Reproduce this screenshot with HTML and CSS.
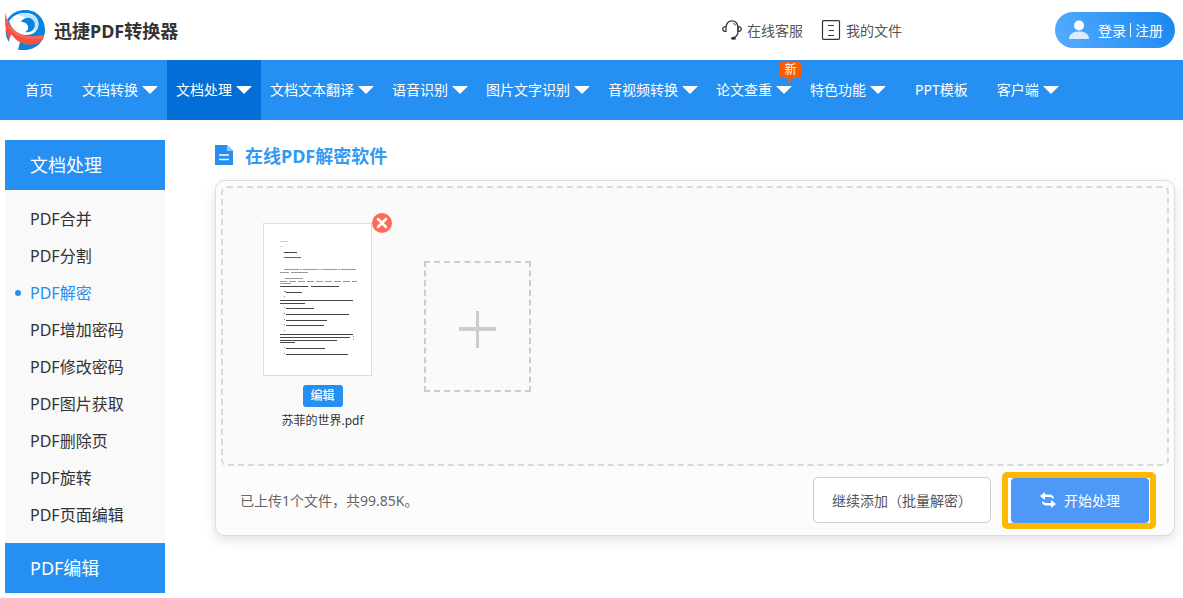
FILE: index.html
```html
<!DOCTYPE html>
<html lang="zh-CN">
<head>
<meta charset="utf-8">
<meta name="viewport" content="width=device-width, initial-scale=1">
<title>迅捷PDF转换器</title>
<link rel="stylesheet" href="styles.css">
</head>
<body>
<header class="top">
  <a class="brand" href="#">
    <svg class="brand-logo" viewBox="0 0 40 40" aria-hidden="true">
      <path fill="#0785dc" d="M2 10C7 2 14 0 21 0c11 0 19 9 19 20S31 40 20 40h-7l2-8L5 22z"/>
      <path fill="#fff" d="M4 11C8 5 15 2.500 22 3c8 .5 12 6 11.500 12-1 7-6 10-12.500 10C13 25 7 20 4 11z"/>
      <path fill="#bfe4fc" d="M12 5C18 1.500 27 3 31.500 8c3 5 2 11-2 14 1-6 0-10-4-13-4-2-9-3-13.500-4z"/>
      <path fill="#0785dc" d="M16 12c2-4 7-5 10-3.500 5 3 5 9 1.500 12-2 1.500-5 2-7.500 1.500 3-1.500 4-4 2.500-7-1.500-2.500-4-3.500-6.500-3z"/>
      <path fill="#0785dc" d="M1 18l4 6-1 8C1 27 0 23 1 18z"/>
      <path fill="#f9503f" d="M.5 3c1 7 5 16 13 20 7 4 17 4 25.500 2-1 5-4 8-8 9-8 2-18 0-24.500-9.500L4 29C0 21-.5 12 .5 3z"/>
      <path fill="#fd8070" d="M.5 3c1 7 5 16 13 20 7 4 17 4 25.500 2l-1 3C26 31 9 28 3 16 1.500 12 .5 8 .5 3z" opacity=".45"/>
    </svg>
    <span class="brand-name">迅捷PDF转换器</span>
  </a>
  <div class="tools">
    <a class="tool" href="#">
      <svg class="tool-icon" viewBox="0 0 20 20" fill="none" stroke="#333" aria-hidden="true">
        <path stroke-width="1.300" d="M4 7C4.500 3 7 .8 10 .8S15.500 3 16 7v4.500c0 3-1.500 5-4 6"/>
        <path stroke-width="1.200" d="M4 6.500C1.800 6.500.7 7.500.7 9s1.100 2.500 3.300 2.500zM16 6.500c2.200 0 3.300 1 3.300 2.500s-1.100 2.500-3.300 2.500z"/>
        <path stroke-width="1" d="M11.500 3l2 2.500"/>
        <ellipse cx="11.500" cy="18.200" rx="2.600" ry="1.500" fill="#333" stroke="none"/>
      </svg>在线客服</a>
    <a class="tool" href="#">
      <svg class="tool-icon" viewBox="0 0 20 20" fill="none" stroke="#333" aria-hidden="true">
        <rect x="1.500" y=".7" width="17" height="18.600" rx="1" stroke-width="1.200"/>
        <path d="M7 5.500h6M8 10.500h5M7 15.500h6" stroke-width="1.200"/>
      </svg>我的文件</a>
  </div>
  <button class="login" type="button">
    <svg class="login-icon" viewBox="0 0 20 20" aria-hidden="true">
      <circle cx="10" cy="5.500" r="5" fill="#fff"/>
      <path fill="#fff" opacity=".8" d="M0 19c0-5 4-7.500 10-7.500S20 14 20 19z"/>
    </svg>
    <span>登录</span><span class="login-rule"></span><span>注册</span>
  </button>
</header>

<nav class="nav">
  <a class="nav-item nav-plain" href="#">首页</a>
  <a class="nav-item nav-menu" href="#">文档转换</a>
  <a class="nav-item nav-menu nav-active" href="#">文档处理</a>
  <a class="nav-item nav-menu" href="#">文档文本翻译</a>
  <a class="nav-item nav-menu" href="#">语音识别</a>
  <a class="nav-item nav-menu" href="#">图片文字识别</a>
  <a class="nav-item nav-menu" href="#">音视频转换</a>
  <a class="nav-item nav-menu" href="#">论文查重<span class="badge">新</span></a>
  <a class="nav-item nav-menu" href="#">特色功能</a>
  <a class="nav-item nav-plain" href="#">PPT模板</a>
  <a class="nav-item nav-menu" href="#">客户端</a>
</nav>

<div class="page">
  <aside class="side">
    <h2 class="side-title">文档处理</h2>
    <ul class="side-list">
      <li><a class="side-link" href="#">PDF合并</a></li>
      <li><a class="side-link" href="#">PDF分割</a></li>
      <li><a class="side-link side-current" href="#">PDF解密</a></li>
      <li><a class="side-link" href="#">PDF增加密码</a></li>
      <li><a class="side-link" href="#">PDF修改密码</a></li>
      <li><a class="side-link" href="#">PDF图片获取</a></li>
      <li><a class="side-link" href="#">PDF删除页</a></li>
      <li><a class="side-link" href="#">PDF旋转</a></li>
      <li><a class="side-link" href="#">PDF页面编辑</a></li>
    </ul>
    <h2 class="side-title">PDF编辑</h2>
  </aside>

  <main class="main">
    <h1 class="title">
      <svg class="title-icon" viewBox="0 0 18 20" aria-hidden="true">
        <path fill="#268ff2" d="M0 0h12l6 6v14H0z"/>
        <path fill="#92c9fb" d="M12 0l6 6h-6z"/>
        <path stroke="#fff" stroke-width="1.500" d="M4 10h10M4 14.500h10"/>
      </svg>在线PDF解密软件</h1>
    <section class="panel">
      <div class="drop">
        <figure class="file">
          <div class="thumb">
            <svg class="thumb-page" viewBox="0 0 107 151" fill="none" stroke="#444" stroke-width="1" aria-hidden="true">
              <path stroke="#ccc" d="M16 17.500h8M16 22.500h2"/>
              <path d="M20 28.500h13"/>
              <path stroke="#666" d="M20 33.500h17"/>
              <path stroke="#999" stroke-dasharray="15 1 2 1" d="M20 45.500h73"/>
              <path stroke="#999" stroke-dasharray="9 2 17 2" d="M16 48.500h29"/>
              <path stroke="#999" d="M21 54.500h18"/>
              <path stroke="#999" stroke-dasharray="7 2" d="M16 57.500h77"/>
              <path stroke="#999" d="M16 59.500h11"/>
              <path stroke-dasharray="28 3" d="M16 62.500h60"/>
              <path stroke="#888" d="M20 67.500h2M20 72.500h1M20 83.500h1M20 89.500h1M20 95.500h1M20 100.500h1M20 106.500h1M20 123.500h1M20 129.500h1M89 112.500h1M89 115.500h1"/>
              <path d="M22 68.500h16M16 76.500h73M16 79.500h25M22 84.500h28M22 90.500h63M22 96.500h41M22 101.500h38M16 110.500h73M16 113.500h70M16 116.500h57M16 118.500h15M22 124.500h39M22 130.500h62"/>
            </svg>
            <button class="remove" type="button" aria-label="删除">
              <svg viewBox="0 0 20 20" stroke="#fff" stroke-width="2.500" stroke-linecap="round" aria-hidden="true"><path d="M6 6l8 8M14 6l-8 8"/></svg>
            </button>
          </div>
          <button class="edit" type="button">编辑</button>
          <figcaption class="file-name">苏菲的世界.pdf</figcaption>
        </figure>
        <button class="add" type="button" aria-label="添加文件"></button>
      </div>
      <div class="actions">
        <p class="status">已上传1个文件，共99.85K。</p>
        <button class="more" type="button">继续添加（批量解密）</button>
        <div class="highlight">
          <button class="start" type="button">
            <svg class="start-icon" viewBox="0 0 16 16" fill="#fff" aria-hidden="true">
              <path d="M5 0v2.500h4c3.500 0 5 1.500 5 4.500-1.500-1.200-3-2-5-2H5v3L0 4z"/>
              <path d="M11 16v-2.500H7c-3.500 0-5-1.500-5-4.500 1.500 1.200 3 2 5 2h4V8l5 4z"/>
            </svg>开始处理</button>
        </div>
      </div>
    </section>
  </main>
</div>
</body>
</html>
```
FILE: styles.css
```css
* { box-sizing: border-box; }
body {
  margin: 0;
  overflow-x: hidden;
  background: #fff;
  color: #333;
  font-family: "Noto Sans", "Noto Sans CJK SC", sans-serif;
  font-size: 14px;
}
a { color: inherit; text-decoration: none; }
button { padding: 0; border: 0; font: inherit; cursor: pointer; }
h1, h2, p, ul, figure { margin: 0; padding: 0; }
ul { list-style: none; }

.top { display: flex; align-items: center; height: 60px; padding: 0 8px 0 5px; }
.brand { display: flex; align-items: center; gap: 9px; }
.brand-logo { width: 40px; height: 40px; }
.brand-name { font-size: 18px; font-weight: 700; }
.tools { display: flex; gap: 18px; margin-left: auto; color: #555; }
.tool { display: flex; align-items: center; gap: 5px; }
.tool-icon { width: 20px; height: 20px; }
.login {
  display: flex; align-items: center; width: 120px; height: 36px;
  margin-left: 153px; padding-left: 14px; border-radius: 18px;
  background: linear-gradient(60deg, #57adff, #1886ee); color: #fff;
}
.login-icon { width: 20px; height: 20px; margin-right: 9px; }
.login-rule { width: 1px; height: 14px; margin: 0 4px; background: #fff; }

.nav { display: flex; height: 60px; padding-left: 5px; background: #268ff2; color: #fff; }
.nav-item { position: relative; display: flex; align-items: center; white-space: nowrap; }
.nav-plain { padding: 0 20px 2px; }
.nav-menu { padding: 0 9px 2px; }
.nav-menu::after {
  content: ""; margin: 2px 0 0 4px;
  border: 8px solid transparent; border-top-color: #fff; border-bottom: 0;
}
.nav-active { background: #036fd6; }
.badge {
  position: absolute; top: 2px; right: 0; width: 21px; height: 16px;
  border-radius: 2px; background: #ff5a00; font-size: 12px; line-height: 16px; text-align: center;
}
.badge::after {
  content: ""; position: absolute; top: 16px; left: 8px;
  border-top: 5px solid #ff5a00; border-right: 5px solid transparent;
}

.page { display: flex; gap: 50px; padding: 20px 8px 0 5px; }
.side { flex: none; width: 160px; background: #f9f9f9; }
.side-title {
  height: 50px; padding-left: 25px; background: #268ff2; color: #fff;
  font-size: 18px; font-weight: 400; line-height: 50px;
}
.side-list { padding: 11px 0 9px; }
.side-link {
  position: relative; display: block; height: 37px; padding-left: 25px;
  font-size: 16px; line-height: 37px;
}
.side-current { color: #268ff2; }
.side-current::before {
  content: ""; position: absolute; top: 15px; left: 10px;
  width: 6px; height: 6px; border-radius: 50%; background: #268ff2;
}

.main { flex: 1; min-width: 0; }
.title {
  display: flex; align-items: center; gap: 12px; height: 30px; margin-bottom: 10px;
  color: #329af3; font-size: 18px; font-weight: 700;
}
.title-icon { width: 18px; height: 20px; }
.panel {
  padding: 5px; border: 1px solid #dcdcdc; border-radius: 10px;
  background: #fcfcfc; box-shadow: 0 4px 12px rgba(0, 0, 0, .12);
}
.drop {
  display: flex; align-items: flex-start; gap: 42px; padding: 35px 40px 33px;
  border: 2px dashed #d9d9d9; border-radius: 6px; background: #fafafa;
}
.file { display: flex; flex-direction: column; align-items: center; width: 119px; }
.thumb {
  position: relative; align-self: flex-start; width: 109px; height: 153px;
  border: 1px solid #ddd; background: #fff;
}
.thumb-page { display: block; width: 100%; height: 100%; }
.remove {
  position: absolute; top: -11px; right: -21px; width: 20px; height: 20px;
  border-radius: 50%; background: #fe6b53;
}
.remove svg { display: block; width: 20px; height: 20px; }
.edit {
  width: 40px; height: 22px; margin-top: 9px; border-radius: 3px;
  background: #268ff2; color: #fff; font-size: 12px; font-weight: 500; line-height: 22px;
}
.file-name { margin-top: 4px; font-size: 12px; line-height: 20px; white-space: nowrap; }
.add {
  width: 107px; height: 131px; margin-top: 38px; border: 2px dashed #ccc;
  background:
    linear-gradient(#ccc, #ccc) center 64px / 37px 4px no-repeat,
    linear-gradient(#ccc, #ccc) center 48px / 3px 37px no-repeat;
}
.actions { display: flex; align-items: center; height: 64px; padding: 4px 13px 0 19px; }
.status { flex: 1; color: #666; }
.more {
  width: 178px; height: 46px; margin-right: 11px; border: 1px solid #ccc;
  border-radius: 5px; background: #fff; color: #555;
}
.highlight {
  padding: 6px 7px 6px 9px; border-radius: 5px;
  background: #fff; box-shadow: inset 0 0 0 6px #ffb900;
}
.start {
  display: flex; align-items: center; justify-content: center; gap: 8px;
  width: 138px; height: 45px; border-radius: 4px; background: #4e98f7; color: #fff;
}
.start-icon { width: 16px; height: 16px; }
```
